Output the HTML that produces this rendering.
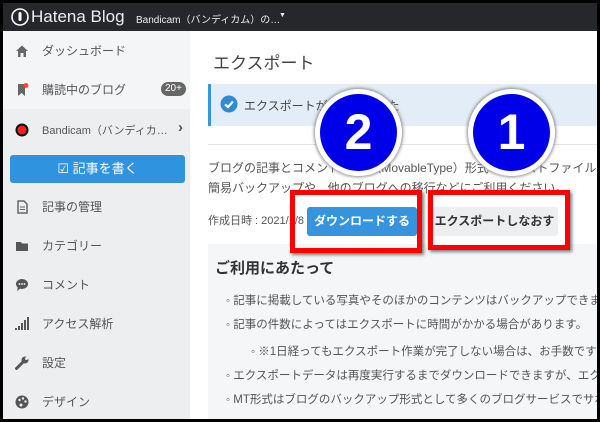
<!DOCTYPE html>
<html><head><meta charset="utf-8"><style>
*{margin:0;padding:0;box-sizing:border-box}
body{width:600px;height:422px;overflow:hidden;background:#000;font-family:"Liberation Sans","Noto Sans CJK JP",sans-serif;color:#444;position:relative}
.frame{position:absolute;left:3px;top:3px;width:594px;height:416px;overflow:hidden;background:#fff}
.top{position:absolute;left:0;top:0;width:594px;height:28px;background:#25272a;color:#fff}
.side{position:absolute;left:0;top:28px;width:187px;height:400px;background:#eceef0}
.side .lite{position:absolute;left:0;top:0;width:187px;height:78px;background:#f4f5f7}
.item{position:absolute;left:12px;font-size:12px;color:#555;display:flex;align-items:center;white-space:nowrap}
.item .ic{width:14px;height:14px;margin-right:13px;display:inline-block;flex:none}
.main{position:absolute;left:187px;top:28px;width:407px;height:390px;background:#fff}
.t{position:absolute;white-space:nowrap}
.list{position:absolute;left:36px;top:258px;font-size:11.5px;color:#555;white-space:nowrap}
.list div{height:24px;line-height:24px}
</style></head><body><div class="frame">
<div class="top">
 <svg style="position:absolute;left:7px;top:4px" width="20" height="20"><circle cx="10" cy="10" r="8" fill="none" stroke="#fff" stroke-width="1.6"/><rect x="8.5" y="5" width="3" height="9" rx="1.5" fill="#fff"/></svg>
 <div class="t" style="left:28px;top:4px;font-size:17px;color:#eee">Hatena Blog</div>
 <div class="t" style="left:133px;top:8px;font-size:10px;color:#eee">Bandicam（バンディカム）の…</div>
 <div class="t" style="left:276px;top:9px;font-size:7px;color:#eee">▼</div>
</div>
<div class="side"><div class="lite"></div>
 <div class="item" style="top:11px"><svg class="ic" viewBox="0 0 14 14"><path d="M1 7L7 1.5 13 7H11V13H8.5V9H5.5V13H3V7Z" fill="#666"/></svg>ダッシュボード</div>
 <div class="item" style="top:50px"><svg class="ic" viewBox="0 0 14 14"><path d="M3 1H10V13L6.5 10 3 13Z" fill="#666"/><circle cx="11" cy="2.5" r="2.5" fill="#f44"/></svg>購読中のブログ</div>
 <div class="t" style="left:158px;top:51px;background:#666;color:#fff;font-size:10px;border-radius:7px;padding:0 4px;line-height:14px">20+</div>
 <div class="item" style="top:91px"><svg class="ic" viewBox="0 0 14 14"><circle cx="7" cy="7" r="5.5" fill="#e22" stroke="#111" stroke-width="2"/></svg><span style="font-size:11px;display:inline-block;width:131px;overflow:hidden;text-overflow:ellipsis">Bandicam（バンディカム）の使い方</span></div>
 <div class="t" style="left:175px;top:88px;font-size:15px;color:#555;font-weight:bold">›</div>
 <div class="t" style="left:7px;top:124px;width:175px;height:28px;background:#2f93e0;border-radius:3px;color:#fff;font-size:13px;text-align:center;line-height:28px">☑ 記事を書く</div>
 <div class="item" style="top:167px"><svg class="ic" viewBox="0 0 14 14"><path d="M3 1H9L12 4V13H3Z" fill="none" stroke="#666" stroke-width="1.5"/><path d="M5 7H10M5 9.5H10" stroke="#666"/></svg>記事の管理</div>
 <div class="item" style="top:206px"><svg class="ic" viewBox="0 0 14 14"><path d="M1 3H6L7 4.5H13V12H1Z" fill="#555"/></svg>カテゴリー</div>
 <div class="item" style="top:245px"><svg class="ic" viewBox="0 0 14 14"><ellipse cx="7" cy="6" rx="6" ry="5" fill="#555"/><path d="M3 9L2 13 6 10Z" fill="#555"/><circle cx="4.5" cy="6" r=".9" fill="#fff"/><circle cx="7" cy="6" r=".9" fill="#fff"/><circle cx="9.5" cy="6" r=".9" fill="#fff"/></svg>コメント</div>
 <div class="item" style="top:284px"><svg class="ic" viewBox="0 0 14 14"><rect x="0" y="11" width="2" height="2" fill="#555"/><rect x="3" y="9" width="2" height="4" fill="#555"/><rect x="6" y="6" width="2" height="7" fill="#555"/><rect x="9" y="3" width="2" height="10" fill="#555"/><rect x="12" y="0" width="2" height="13" fill="#555"/></svg>アクセス解析</div>
 <div class="item" style="top:323px"><svg class="ic" viewBox="0 0 14 14"><path d="M1.5 12.5L8 6" stroke="#555" stroke-width="3" stroke-linecap="round"/><circle cx="10" cy="4" r="3.5" fill="#555"/><circle cx="11.5" cy="2.5" r="1.5" fill="#eceef0"/></svg>設定</div>
 <div class="item" style="top:362px"><svg class="ic" viewBox="0 0 14 14"><circle cx="7" cy="7" r="6.5" fill="#555"/><circle cx="4.5" cy="5" r="1.2" fill="#eceef0"/><circle cx="8" cy="3.5" r="1.2" fill="#eceef0"/><circle cx="10.5" cy="6.5" r="1.2" fill="#eceef0"/><circle cx="6" cy="10" r="1.5" fill="#eceef0"/></svg>デザイン</div>
</div>
<div class="main">
 <div class="t" style="left:23px;top:18px;font-size:17px;color:#444">エクスポート</div>
 <div style="position:absolute;left:18px;top:53px;width:389px;height:42px;background:#e3edf7;border-left:3px solid #3a94dd"></div>
 <svg style="position:absolute;left:30px;top:64px" width="18" height="18"><circle cx="9" cy="9" r="8.5" fill="#2f8ad8"/><path d="M5 9.5L8 12 13 6.5" fill="none" stroke="#fff" stroke-width="2.2"/></svg>
 <div class="t" style="left:54px;top:66px;font-size:12px;color:#444">エクスポートが完了しました</div>
 <div style="position:absolute;left:18px;top:113px;width:389px;height:1px;background:#e2e2e2"></div>
 <div class="t" style="left:18px;top:127px;font-size:12px;color:#555;line-height:20px">ブログの記事とコメントをMT（MovableType）形式のテキストファイルで書き出します。<br>簡易バックアップや、他のブログへの移行などにご利用ください。</div>
 <div class="t" style="left:18px;top:181px;font-size:11px;color:#555">作成日時 : 2021/1/8</div>
 <div class="t" style="left:117px;top:176px;width:110px;height:29px;background:#3594dd;border-radius:3px;color:#fff;font-size:12px;font-weight:bold;text-align:center;line-height:29px">ダウンロードする</div>
 <div class="t" style="left:241px;top:176px;width:127px;height:29px;background:#eceeef;border-radius:3px;color:#333;font-size:12px;font-weight:bold;text-align:center;line-height:29px">エクスポートしなおす</div>
 <div style="position:absolute;left:18px;top:213px;width:389px;height:180px;background:#f5f6f7"></div>
 <div class="t" style="left:25px;top:226px;font-size:15px;font-weight:bold;color:#333">ご利用にあたって</div>
 <div class="list">
  <div>◦ 記事に掲載している写真やそのほかのコンテンツはバックアップできません</div>
  <div>◦ 記事の件数によってはエクスポートに時間がかかる場合があります。</div>
  <div style="padding-left:25px;height:27px;line-height:30px">◦ ※1日経ってもエクスポート作業が完了しない場合は、お手数ですが</div>
  <div>◦ エクスポートデータは再度実行するまでダウンロードできますが、エクスポート</div>
  <div>◦ MT形式はブログのバックアップ形式として多くのブログサービスでサポート</div>
 </div>
 <div style="position:absolute;left:100px;top:159px;width:132px;height:63px;border:5px solid #f00;box-shadow:2px 2px 3px rgba(0,0,0,.5)"></div>
 <div style="position:absolute;left:238px;top:159px;width:142px;height:60px;border:5px solid #f00;box-shadow:2px 2px 3px rgba(0,0,0,.5)"></div>
 <div class="t" style="left:125px;top:58px;width:87px;height:87px;border-radius:50%;background:#0000e8;border:5px solid #fff;box-shadow:0 0 3px 1px #888;color:#fff;font-size:50px;font-weight:bold;text-align:center;line-height:77px">2</div>
 <div class="t" style="left:278px;top:58px;width:87px;height:87px;border-radius:50%;background:#0000e8;border:5px solid #fff;box-shadow:0 0 3px 1px #888;color:#fff;font-size:50px;font-weight:bold;text-align:center;line-height:77px">1</div>
</div>
</div></body></html>
